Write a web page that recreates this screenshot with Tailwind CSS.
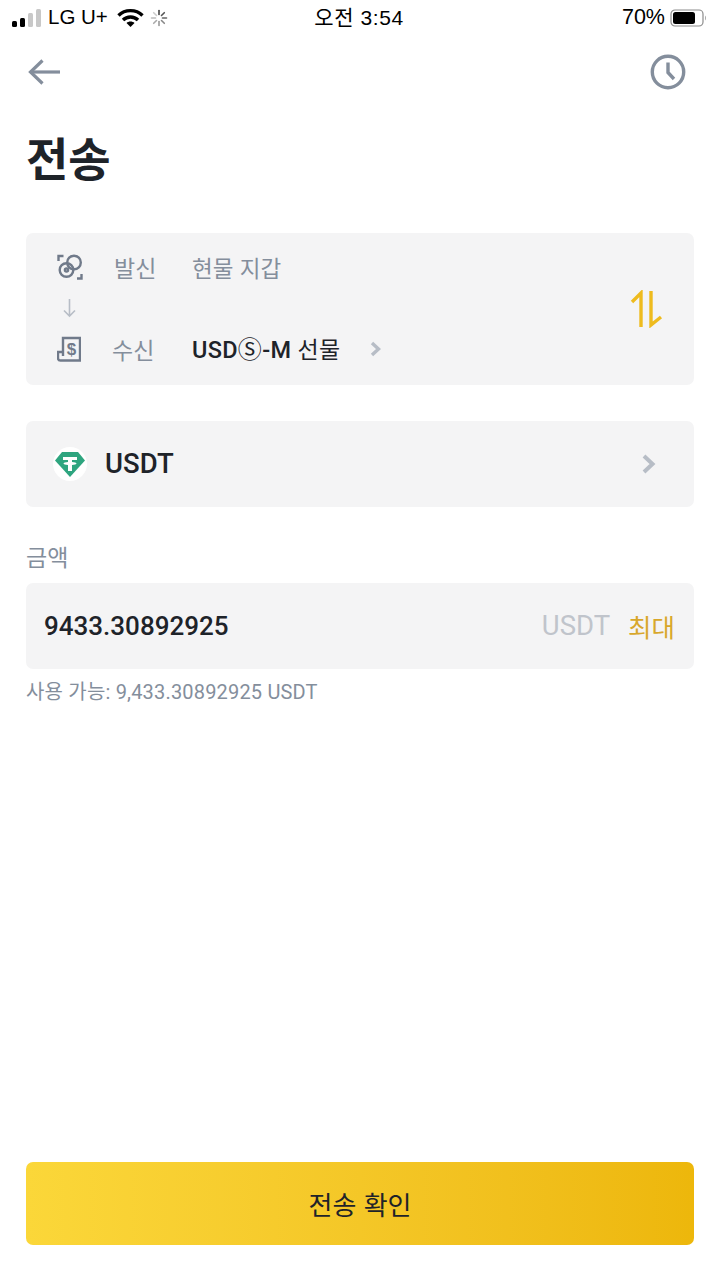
<!DOCTYPE html>
<html lang="ko">
  <head>
    <meta charset="UTF-8" />
    <meta name="viewport" content="width=device-width, initial-scale=1.0" />
    <title>전송</title>
    <script src="https://cdn.jsdelivr.net/npm/@tailwindcss/browser@4"></script>
  </head>
  <body class="bg-white">
    <div class="w-[720px] h-[1280px] flex flex-col font-['Roboto','Noto_Sans_CJK_KR',sans-serif] text-[#1e2329] overflow-hidden">
      <!-- Status bar -->
      <div class="h-[35px] flex items-center justify-between pl-[11px] pr-[13px] text-black">
        <div class="w-[260px] flex items-center">
          <svg width="32" height="20" viewBox="0 0 32 20" fill="currentColor">
            <rect x="1" y="13" width="5" height="6" rx="1.5" />
            <rect x="9" y="10" width="5" height="9" rx="1.5" />
            <rect x="17" y="5" width="5" height="14" rx="1.5" fill="#c8c8c8" />
            <rect x="25" y="1" width="5" height="18" rx="1.5" fill="#c8c8c8" />
          </svg>
          <span class="ml-[5px] text-[20.5px] leading-none font-['Liberation_Sans',sans-serif]">LG U+</span>
          <svg class="ml-[9px]" width="27" height="20" viewBox="0 0 27 20" fill="none" stroke="currentColor" stroke-width="3.4">
            <path d="M1.5 7.5 C8 1 19 1 25.5 7.5" />
            <path d="M6 12 C10 8 17 8 21 12" />
            <path d="M13.5 19 L9.5 15 C11.5 13 15.5 13 17.5 15 Z" fill="currentColor" stroke="none" />
          </svg>
          <svg class="ml-[6px]" width="18" height="18" viewBox="0 0 18 18" stroke="#8a8a8a" stroke-width="1.6" stroke-linecap="round">
            <path d="M9 1.5V5.5" stroke="#444" />
            <path d="M14.3 3.7L11.5 6.5" stroke="#555" />
            <path d="M16.5 9H12.5" stroke="#666" />
            <path d="M14.3 14.3L11.5 11.5" stroke="#888" />
            <path d="M9 16.5V12.5" stroke="#999" />
            <path d="M3.7 14.3L6.5 11.5" stroke="#aaa" />
            <path d="M1.5 9H5.5" stroke="#bbb" />
            <path d="M3.7 3.7L6.5 6.5" stroke="#ccc" />
          </svg>
        </div>
        <span class="text-[21px] leading-none font-['Liberation_Sans','Noto_Sans_CJK_KR',sans-serif] tracking-[0.6px]">오전 3:54</span>
        <div class="w-[260px] flex items-center justify-end">
          <span class="text-[21.5px] leading-none font-['Liberation_Sans',sans-serif]">70%</span>
          <svg class="ml-[5px]" width="37" height="18" viewBox="0 0 37 18" fill="none">
            <rect x="1" y="1" width="32" height="16" rx="4" stroke="#8c8c8c" stroke-width="1.2" />
            <rect x="3" y="3" width="22" height="12" rx="2.5" fill="#000" />
            <path d="M35 6.5C36 7.3 36 10.7 35 11.5Z" fill="#8c8c8c" />
          </svg>
        </div>
      </div>

      <!-- Nav -->
      <div class="h-[46px] mt-[14px] flex items-center justify-between pl-[26px] pr-[34px]">
        <svg width="36" height="28" viewBox="0 0 36 28" fill="none" stroke="#848e9c" stroke-width="3.2">
          <path d="M34 14H4" />
          <path d="M16.5 2.5L4.5 14L16.5 25.5" />
        </svg>
        <svg width="36" height="36" viewBox="0 0 36 36" fill="none" stroke="#848e9c" stroke-width="3.4">
          <circle cx="18" cy="18" r="15.7" />
          <path d="M18 8.5V18.5L24 25" />
        </svg>
      </div>

      <!-- Title -->
      <h1 class="ml-[26px] mt-[31px] text-[46px] leading-[60px] font-bold font-['Noto_Sans_CJK_KR',sans-serif]">전송</h1>

      <div class="mx-[26px] mt-[47px] flex flex-col">
        <!-- Transfer from / to -->
        <div class="h-[152px] rounded-[7px] bg-[#f4f4f5] flex items-center justify-between pl-[31px] pr-[30px]">
          <div class="flex flex-col">
            <div class="h-[30px] flex items-center -mt-[2px]">
              <svg width="26" height="26" viewBox="0 0 26 26" fill="none" stroke="#707a8a" stroke-width="2.4">
                <circle cx="9.5" cy="16" r="6.8" />
                <circle cx="9.5" cy="16" r="1.6" />
                <circle cx="17" cy="8.5" r="6.8" />
                <path d="M1.5 7V2H6.5M20 24.5H24.5V20" />
              </svg>
              <span class="ml-[31px] w-[78px] text-[23px] leading-none text-[#848e9c] font-['Noto_Sans_CJK_KR',sans-serif]">발신</span>
              <span class="text-[22.5px] leading-none text-[#848e9c] font-['Noto_Sans_CJK_KR',sans-serif]">현물 지갑</span>
            </div>
            <div class="h-[52px] flex items-center pl-[6px]">
              <svg width="13" height="19" viewBox="0 0 13 19" fill="none" stroke="#b7bdc6" stroke-width="1.6">
                <path d="M6.5 0V17M1 11.5L6.5 17L12 11.5" />
              </svg>
            </div>
            <div class="h-[30px] flex items-center">
              <svg width="24" height="26" viewBox="0 0 24 26" fill="none" stroke="#707a8a" stroke-width="2.4">
                <path d="M6 20V2H23V24.5H3.5C2 24.5 1 23.5 1 22V16H6" />
                <text x="14.5" y="19" font-size="17" font-weight="700" text-anchor="middle" fill="#707a8a" stroke="none" font-family="Liberation Sans">$</text>
              </svg>
              <span class="ml-[31px] w-[80px] text-[23px] leading-none text-[#848e9c] font-['Noto_Sans_CJK_KR',sans-serif]">수신</span>
              <span class="text-[23.5px] leading-none font-medium tracking-[0.3px]">USD<span class="text-[24px] font-normal font-['Noto_Sans_CJK_KR',sans-serif]">Ⓢ</span>-M <span class="font-normal font-['Noto_Sans_CJK_KR',sans-serif] text-[23px]">선물</span></span>
              <svg class="ml-[30px]" width="12" height="16" viewBox="0 0 12 16" fill="none" stroke="#b7bdc6" stroke-width="3.4">
                <path d="M2 2L8.5 8L2 14" />
              </svg>
            </div>
          </div>
          <svg width="34" height="38" viewBox="0 0 34 38" fill="none" stroke="#eebb1e" stroke-width="3.4">
            <path d="M11 37V3L2 12" />
            <path d="M21 1V35L31 27" />
          </svg>
        </div>

        <!-- Coin -->
        <div class="mt-[36px] h-[86px] rounded-[7px] bg-[#f4f4f5] flex items-center justify-between pl-[27px] pr-[38px]">
          <div class="flex items-center">
            <svg width="34" height="34" viewBox="0 0 34 34">
              <circle cx="17" cy="17" r="17" fill="#fff" />
              <path d="M9 5H25L32 13.5L17 30L2 13.5Z" fill="#2ea57f" />
              <path d="M10 10H24V13H19V15C21.5 15.2 23.5 15.8 23.5 16.5S21.5 17.8 19 18V24H15V18C12.5 17.8 10.5 17.2 10.5 16.5S12.5 15.2 15 15V13H10Z" fill="#fff" />
            </svg>
            <span class="ml-[18px] text-[27.5px] leading-none font-medium">USDT</span>
          </div>
          <svg width="14" height="20" viewBox="0 0 14 20" fill="none" stroke="#b7bdc6" stroke-width="4">
            <path d="M2 2L10.5 10L2 18" />
          </svg>
        </div>

        <!-- Amount -->
        <label class="mt-[36px] h-[26px] flex items-center text-[23px] leading-none text-[#848e9c] font-['Noto_Sans_CJK_KR',sans-serif]">금액</label>
        <div class="mt-[14px] h-[86px] rounded-[7px] bg-[#f4f4f5] flex items-center justify-between pl-[18px] pr-[19px]">
          <span class="text-[26px] leading-none font-medium">9433.30892925</span>
          <div class="flex items-center">
            <span class="text-[27.5px] leading-none text-[#c0c4cb]">USDT</span>
            <span class="ml-[18px] text-[25.5px] leading-none text-[#d8a72b] font-['Noto_Sans_CJK_KR',sans-serif]">최대</span>
          </div>
        </div>
        <p class="mt-[12px] h-[22px] flex items-center text-[20px] leading-none tracking-[0.18px] text-[#848e9c] font-['Roboto','Noto_Sans_CJK_KR',sans-serif]">사용 가능: 9,433.30892925 USDT</p>
      </div>

      <!-- Confirm -->
      <button class="mx-[26px] mt-[459px] h-[83px] rounded-[7px] bg-gradient-to-r from-[#fbd739] to-[#edb70b] text-[26px] text-[#1e2329] font-['Noto_Sans_CJK_KR',sans-serif]">전송 확인</button>
    </div>
  </body>
</html>
